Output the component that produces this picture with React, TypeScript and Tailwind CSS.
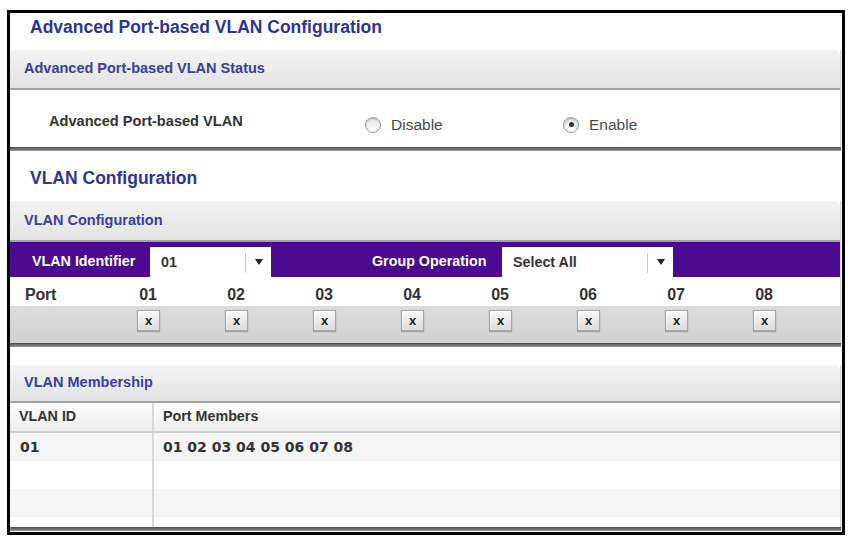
import React from "react";

const ports = ["01", "02", "03", "04", "05", "06", "07", "08"];
const portCenters = [148, 236, 324, 412, 500, 588, 676, 764];

function Radio({ checked }: { checked?: boolean }) {
  return (
    <span className="inline-flex h-[16px] w-[16px] items-center justify-center rounded-full border border-[#9a9a9a] bg-gradient-to-b from-[#e6e6e6] to-white shadow-[inset_0_1px_2px_rgba(0,0,0,0.2)]">
      {checked && <span className="h-[5px] w-[5px] rounded-full bg-[#333]" />}
    </span>
  );
}

function SectionHeader({ children, h }: { children: React.ReactNode; h: string }) {
  return (
    <div className={`flex ${h} items-center rounded-tr-[6px] border-b-2 border-[#a3a3a3] bg-gradient-to-b from-[#f3f3f3] to-[#e3e3e3] pl-[14px] text-[14.5px] font-bold text-[#3a3e9a]`}>
      {children}
    </div>
  );
}

function Shadow() {
  return <div className="h-[4px] bg-gradient-to-b from-[#4a4a4a] to-[#9a9a9a]" />;
}

function Select({ value, width, divider }: { value: string; width: string; divider: string }) {
  return (
    <div className={`relative flex h-[30px] items-center self-end bg-white ${width}`}>
      <span className="pl-[11px] pt-[2px] text-[14.3px] font-bold text-[#333]">{value}</span>
      <span className={`absolute top-[6px] h-[20px] w-px bg-[#c8c8c8] ${divider}`} />
      <span className="absolute right-[8px] top-[12px] h-0 w-0 border-x-[4px] border-t-[6px] border-x-transparent border-t-[#222]" />
    </div>
  );
}

export default function App() {
  return (
    <div className="h-[540px] w-[851px] bg-white pl-[7px] pt-[10px] font-['Liberation_Sans',Arial,sans-serif]">
      <div className="h-[525px] w-[838px] border-[3px] border-black bg-white pr-[1px]">
        {/* Title */}
        <div className="flex h-[37px] items-center pb-[8px] pl-[20px] text-[17.5px] font-bold text-[#2c3596]">
          Advanced Port-based VLAN Configuration
        </div>

        {/* Panel 1 */}
        <div className="border-r border-[#cfcfcf]">
          <SectionHeader h="h-[40px]">Advanced Port-based VLAN Status</SectionHeader>
          <div className="flex h-[57px] items-center pt-[12px]">
            <span className="w-[355px] pb-[6px] pl-[39px] text-[14.6px] font-bold text-[#333]">
              Advanced Port-based VLAN
            </span>
            <span className="flex w-[198px] items-center gap-[10px] text-[15.5px] text-[#4a4a4a]">
              <Radio />
              Disable
            </span>
            <span className="flex items-center gap-[10px] text-[15.5px] text-[#4a4a4a]">
              <Radio checked />
              Enable
            </span>
          </div>
        </div>
        <Shadow />

        {/* Title 2 */}
        <div className="flex h-[50px] items-center pl-[20px] pt-[5px] text-[17.5px] font-bold text-[#2c3596]">
          VLAN Configuration
        </div>

        {/* Panel 2 */}
        <div className="border-r border-[#cfcfcf]">
          <SectionHeader h="h-[41px]">VLAN Configuration</SectionHeader>
          <div className="flex h-[35px] items-center bg-[#4a0b8e] pt-[4px] text-[14.3px] font-bold text-white">
            <span className="w-[140px] pl-[22px]">VLAN Identifier</span>
            <Select value="01" width="w-[121px]" divider="left-[95px]" />
            <span className="w-[231px] pl-[101px]">Group Operation</span>
            <Select value="Select All" width="w-[171px]" divider="left-[145px]" />
          </div>
          <div className="relative h-[29px] bg-white text-[16px] font-bold tracking-[-0.2px] text-[#333]">
            <span className="absolute left-[15px] top-[6px]">Port</span>
            {ports.map((p, i) => (
              <span
                key={p}
                className="absolute top-[6px] w-[40px] text-center"
                style={{ left: portCenters[i] - 10 - 20 }}
              >
                {p}
              </span>
            ))}
          </div>
          <div className="relative h-[37px] bg-gradient-to-b from-[#dcdcdc] to-[#d2d2d2]">
            {ports.map((p, i) => (
              <span
                key={p}
                className="absolute top-[4px] flex h-[21px] w-[23px] items-center justify-center border border-[#a8a8a8] bg-gradient-to-b from-[#fafafa] to-[#dcdcdc] text-[13px] font-bold text-[#222] shadow-[0_1px_1px_rgba(0,0,0,0.25)]"
                style={{ left: portCenters[i] - 10 - 11 }}
              >
                x
              </span>
            ))}
          </div>
        </div>
        <Shadow />

        <div className="h-[18px]" />

        {/* Panel 3 */}
        <div className="border-r border-[#cfcfcf]">
          <SectionHeader h="h-[38px]">VLAN Membership</SectionHeader>
          <div className="flex h-[30px] border-b-2 border-[#d0d0d0] bg-gradient-to-b from-white to-[#ececec] text-[14.3px] font-bold text-[#333]">
            <span className="flex w-[144px] items-center border-r-2 border-[#d8d8d8] pl-[9px]">VLAN ID</span>
            <span className="flex items-center pl-[9px]">Port Members</span>
          </div>
          {[0, 1, 2, 3].map((r) => (
            <div
              key={r}
              className={`flex ${r === 3 ? "h-[10px]" : "h-[28px]"} ${r % 2 === 0 ? "bg-[#f5f5f5]" : "bg-white"} font-['DejaVu_Sans',Verdana,sans-serif] text-[14px] font-bold text-[#333]`}
            >
              <span className="flex w-[144px] items-center border-r-2 border-[#d8d8d8] pl-[10px]">
                {r === 0 ? "01" : ""}
              </span>
              <span className="flex items-center pl-[9px]">{r === 0 ? "01 02 03 04 05 06 07 08" : ""}</span>
            </div>
          ))}
        </div>
        <Shadow />
      </div>
    </div>
  );
}
